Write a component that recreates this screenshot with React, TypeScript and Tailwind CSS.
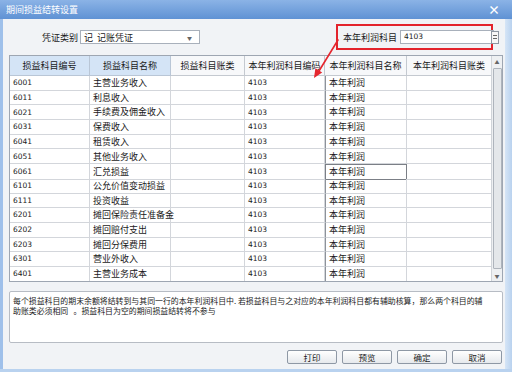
import React from 'react';

const rows: [string, string][] = [
  ['6001', '主营业务收入'],
  ['6011', '利息收入'],
  ['6021', '手续费及佣金收入'],
  ['6031', '保费收入'],
  ['6041', '租赁收入'],
  ['6051', '其他业务收入'],
  ['6061', '汇兑损益'],
  ['6101', '公允价值变动损益'],
  ['6111', '投资收益'],
  ['6201', '摊回保险责任准备金'],
  ['6202', '摊回赔付支出'],
  ['6203', '摊回分保费用'],
  ['6301', '营业外收入'],
  ['6401', '主营业务成本'],
];

const font = { fontFamily: '"Noto Sans CJK SC", "Noto Sans", sans-serif' };
const numFont = { fontFamily: '"DejaVu Sans", "Noto Sans CJK SC", sans-serif' };

export default function App() {
  return (
    <div className="relative w-[512px] h-[372px] bg-white overflow-hidden text-[#1a1a1a]" style={font}>
      {/* title bar */}
      <div className="h-[19px] flex items-center justify-between pl-[6px] pr-[12px] bg-gradient-to-b from-[#8bb3e6] to-[#5f92d4]">
        <span className="text-[9px] text-white leading-none">期间损益结转设置</span>
        <span className="text-[12px] text-white font-bold leading-none">×</span>
      </div>

      <div className="flex h-[350px]">
        <div className="w-[3px] bg-[#9fc0ea]" />
        <div className="flex-1 flex flex-col bg-[#f1f3f6] pl-[6px] pr-[2px]">
          {/* top controls */}
          <div className="h-[36px] flex items-center">
            <span className="ml-[33px] text-[9px] leading-none whitespace-nowrap">凭证类别</span>
            <div className="ml-[2px] w-[120px] h-[14px] bg-white border border-[#a8b0bb] flex items-center justify-between px-[3px]">
              <span className="text-[9px] leading-none whitespace-nowrap">记&nbsp;&nbsp;记账凭证</span>
              <span className="text-[5px] text-[#666] mr-[4px] leading-none">▼</span>
            </div>
            <div className="ml-auto mr-[4px] flex items-center">
              <div className="w-[157px] h-[26px] border-2 border-[#e3232c] flex items-center pl-[5px]">
                <span className="text-[9px] leading-none whitespace-nowrap shrink-0">本年利润科目</span>
                <div className="ml-[3px] w-[94px] shrink-0 h-[14px] bg-white border border-[#a8b0bb] flex items-center px-[3px]">
                  <span className="text-[7.5px] leading-none" style={numFont}>4103</span>
                </div>
              </div>
              <div className="-ml-[2px] w-[8px] h-[13px] bg-[#f7f7f7] border border-[#8d96a2] flex flex-col items-center justify-center gap-[2px]">
                <div className="w-[4px] h-px bg-[#666]" />
                <div className="w-[4px] h-px bg-[#666]" />
              </div>
            </div>
          </div>

          {/* table */}
          <div className="w-[494px] h-[227px] border border-[#9ea6b2] bg-white flex overflow-hidden">
            <div className="flex-1 overflow-hidden">
              <div className="grid grid-cols-[80px_81px_74px_80px_82px_84px] h-[20px] text-[9px] whitespace-nowrap">
                <div className="bg-[#d4e4f6] border-r border-b border-[#b9c6d6] flex items-center justify-center">损益科目编号</div>
                <div className="bg-[#d4e4f6] border-r border-b border-[#b9c6d6] flex items-center justify-center">损益科目名称</div>
                <div className="bg-[#f7f8fa] border-r border-b border-[#c4c9d0] flex items-center justify-center">损益科目账类</div>
                <div className="bg-[#f7f8fa] border-r border-b border-[#c4c9d0] flex items-center justify-center">本年利润科目编码</div>
                <div className="bg-[#f7f8fa] border-r border-b border-[#c4c9d0] flex items-center justify-center">本年利润科目名称</div>
                <div className="bg-[#f7f8fa] border-b border-[#c4c9d0] flex items-center justify-center">本年利润科目账类</div>
              </div>
              {rows.map(([code, name]) => (
                <div key={code} className="grid grid-cols-[80px_81px_74px_80px_82px_84px] h-[14.7px]">
                  <div className="border-r border-b border-[#d3d6db] flex items-center pl-[3px] text-[7.5px]" style={numFont}>{code}</div>
                  <div className="border-r border-b border-[#d3d6db] flex items-center pl-[3px] text-[9px] whitespace-nowrap">{name}</div>
                  <div className="border-r border-b border-[#d3d6db]" />
                  <div className="border-r border-b border-[#d3d6db] flex items-center pl-[3px] text-[7.5px]" style={numFont}>4103</div>
                  <div className={`border-b flex items-center pl-[3px] text-[9px] ${code === '6061' ? 'border border-[#7b7f86]' : 'border-r border-[#d3d6db] border-l-[#8e939a] border-l'}`}>本年利润</div>
                  <div className="border-b border-[#d3d6db]" />
                </div>
              ))}
            </div>
            {/* scrollbar */}
            <div className="w-[11px] bg-[#eef0f2] border-l border-[#d0d4d9] flex flex-col items-center">
              <div className="h-[11px] w-full flex items-center justify-center text-[5px] text-[#666] leading-none">▲</div>
              <div className="flex-1 w-[9px] my-[1px] bg-[#e4e7ea] border border-[#aeb4bc] rounded-[1px]" />
              <div className="h-[11px] w-full flex items-center justify-center text-[5px] text-[#666] leading-none">▼</div>
            </div>
          </div>

          {/* description */}
          <div className="mt-[9px] w-[494px] h-[52px] bg-white border border-[#b7bcc4] rounded-[2px] px-[3px] pt-[4px] text-[7.9px] leading-[9.5px] text-[#222]">
            <div className="whitespace-nowrap">每个损益科目的期末余额将结转到与其同一行的本年利润科目中. 若损益科目与之对应的本年利润科目都有辅助核算，那么两个科目的辅</div>
            <div className="whitespace-nowrap">助账类必须相同&nbsp;&nbsp;&nbsp;。损益科目为空的期间损益结转将不参与</div>
          </div>

          {/* buttons */}
          <div className="mt-[7px] flex justify-end gap-[5px] pr-[1px]">
            {['打印', '预览', '确定', '取消'].map((b) => (
              <div key={b} className="w-[50px] h-[14px] border border-[#8e98a5] rounded-[2px] bg-gradient-to-b from-white to-[#e6e9ed] flex items-center justify-center text-[8.5px] leading-none">
                {b}
              </div>
            ))}
          </div>
          <div className="flex-1" />
        </div>
        <div className="w-[7px] bg-gradient-to-r from-[#d6e5f6] to-[#b9d2ef]" />
      </div>
      <div className="h-[3px] bg-[#b9d2ef]" />

      {/* red arrow annotation */}
      <svg className="absolute left-[300px] top-[36px]" width="45" height="46" viewBox="0 0 45 46">
        <line x1="38" y1="4" x2="19" y2="35" stroke="#e5262e" strokeWidth="1.6" strokeLinecap="round" />
        <polygon points="14,42 22.2,36.5 15.4,32.3" fill="#e5262e" />
      </svg>
    </div>
  );
}
